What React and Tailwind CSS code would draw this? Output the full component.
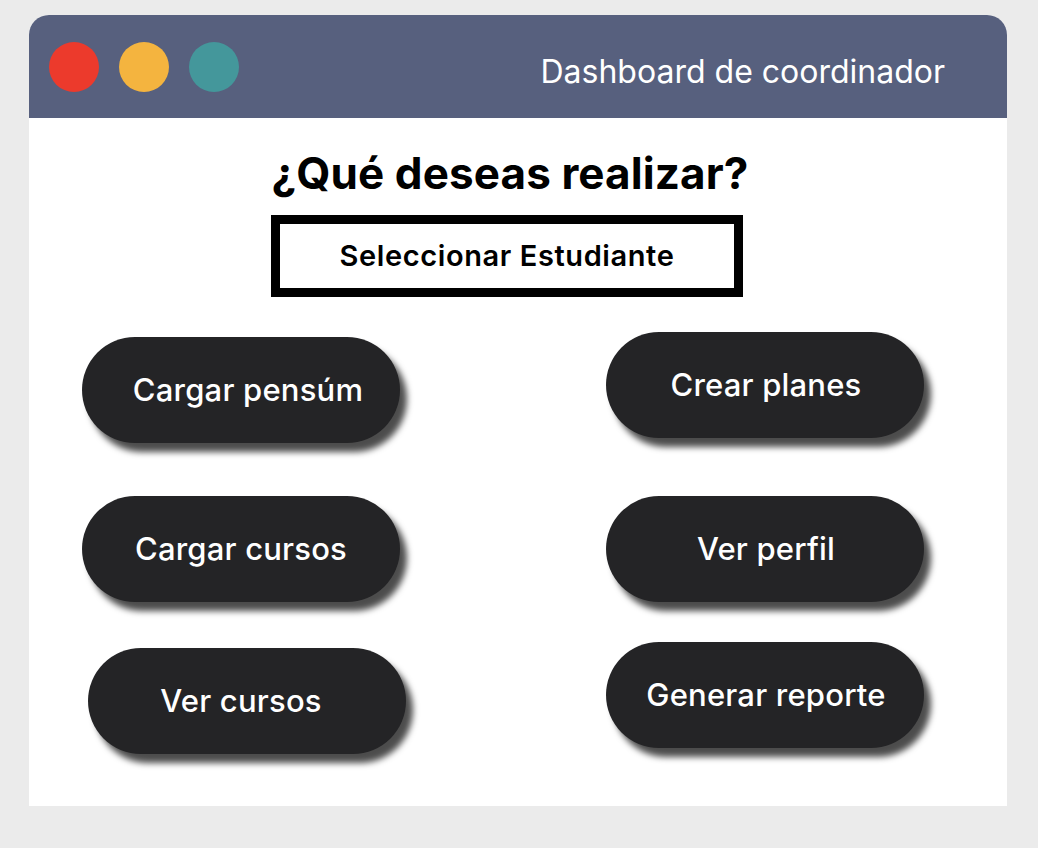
const buttonsLeft = [
  { label: "Cargar pensúm", mt: "mt-0", ml: "ml-0", text: "pl-[14px]" },
  { label: "Cargar cursos", mt: "mt-[53px]", ml: "ml-0", text: "pr-0" },
  { label: "Ver cursos", mt: "mt-[46px]", ml: "ml-[6px]", text: "pr-[12px]" },
];

const buttonsRight = [
  { label: "Crear planes", mt: "mt-0", text: "pl-[2px]" },
  { label: "Ver perfil", mt: "mt-[58px]", text: "pl-[2px]" },
  { label: "Generar reporte", mt: "mt-[40px]", text: "pl-[2px]" },
];

const PillButton = ({ label, className }) => (
  <button
    className={`w-[318px] h-[106px] rounded-full bg-[#242426] text-white text-[31px] font-medium tracking-[0.2px] flex items-center justify-center shadow-[7px_9px_6px_rgba(0,0,0,0.7)] ${className}`}
  >
    {label}
  </button>
);

export default function App() {
  return (
    <div
      className="w-[1038px] h-[848px] bg-[#ebebeb] pt-[15px] pl-[29px]"
      style={{ fontFamily: "Inter, 'Noto Sans', sans-serif" }}
    >
      <div className="w-[978px] h-[791px] bg-white rounded-t-[20px] overflow-hidden flex flex-col">
        {/* title bar */}
        <div className="h-[103px] bg-[#57607e] flex items-center pl-[20px] pr-[62px]">
          <div className="flex gap-[20px]">
            <span className="w-[50px] h-[50px] rounded-full bg-[#ec3a2c]" />
            <span className="w-[50px] h-[50px] rounded-full bg-[#f4b43f]" />
            <span className="w-[50px] h-[50px] rounded-full bg-[#44979b]" />
          </div>
          <span className="ml-auto mt-[10px] text-white text-[32px]">
            Dashboard de coordinador
          </span>
        </div>

        {/* body */}
        <div className="flex flex-col items-center pr-[22px]">
          <h1 className="mt-[30px] text-[44px] font-bold text-black leading-[50px] tracking-[0.1px] pl-[6px]">
            ¿Qué deseas realizar?
          </h1>
          <div className="mt-[17px] w-[472px] h-[82px] border-[9px] border-black flex items-center justify-center">
            <span className="text-[29px] font-semibold text-black tracking-[0.6px]">
              Seleccionar Estudiante
            </span>
          </div>
        </div>

        <div className="flex pl-[53px] mt-[35px]">
          <div className="flex flex-col w-[524px] pt-[5px]">
            {buttonsLeft.map((b) => (
              <div key={b.label} className={`${b.mt} ${b.ml}`}>
                <PillButton label={b.label} className={b.text} />
              </div>
            ))}
          </div>
          <div className="flex flex-col">
            {buttonsRight.map((b) => (
              <div key={b.label} className={b.mt}>
                <PillButton label={b.label} className={b.text} />
              </div>
            ))}
          </div>
        </div>
      </div>
    </div>
  );
}
